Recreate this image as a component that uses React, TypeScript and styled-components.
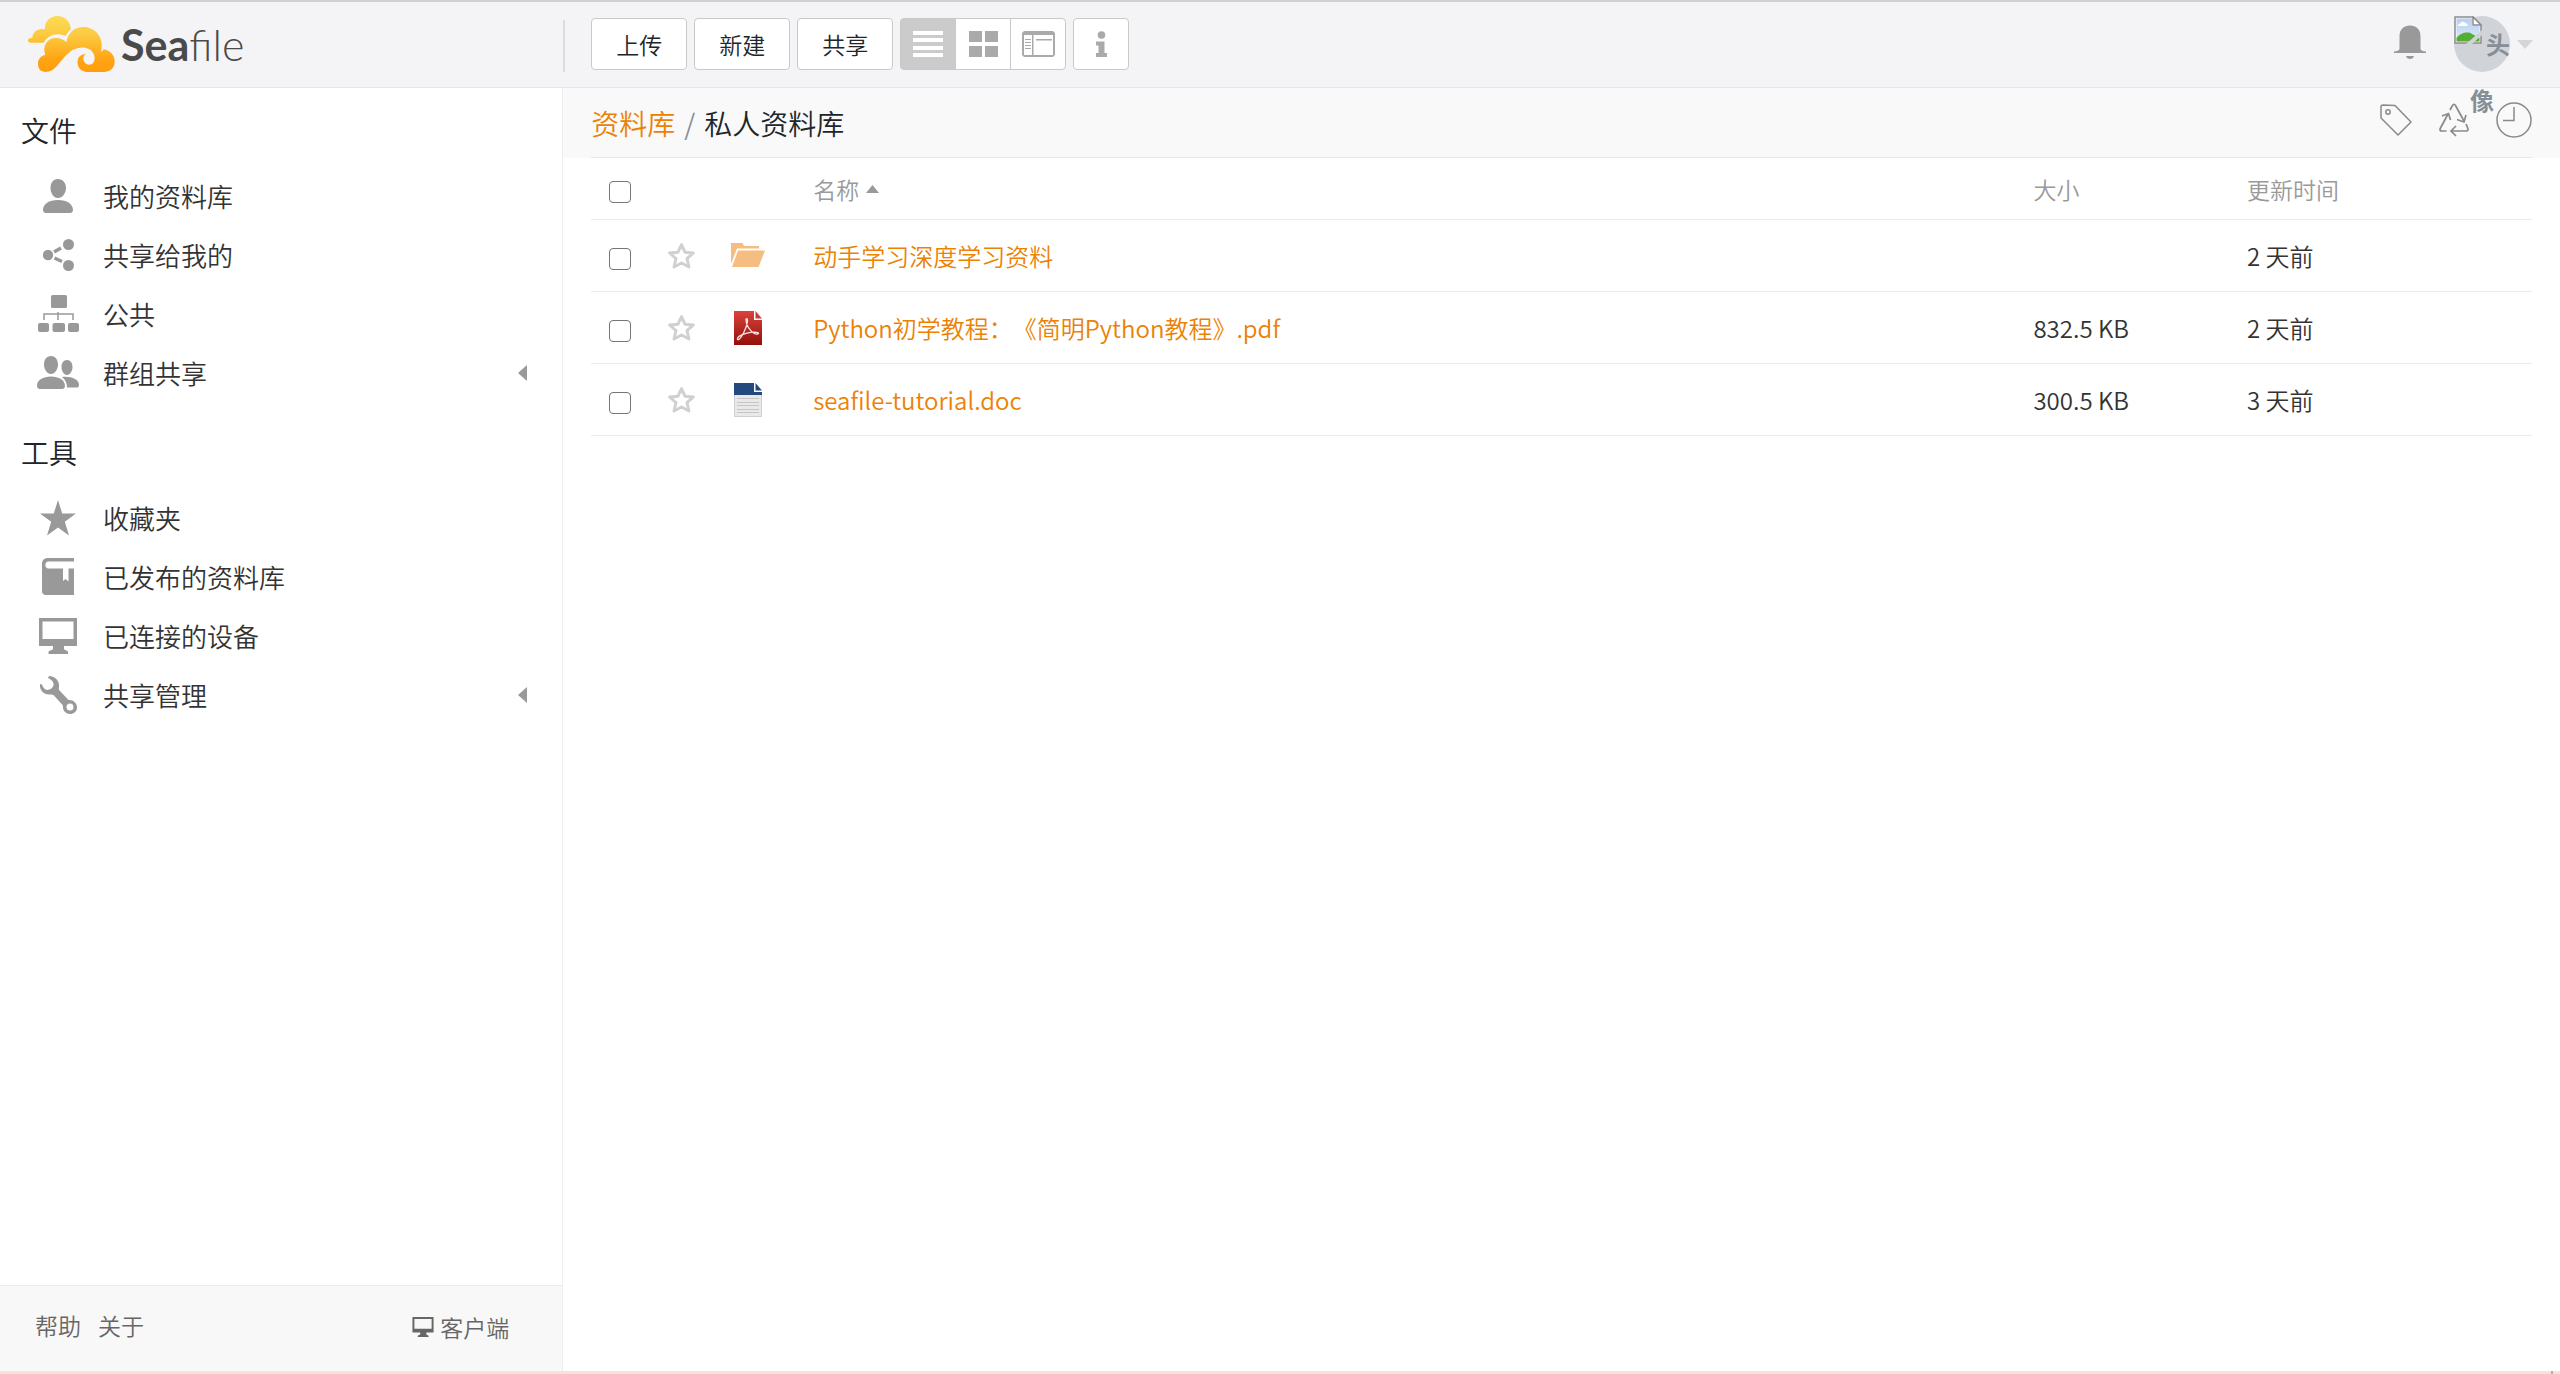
import React from 'react';
import styled, { createGlobalStyle } from 'styled-components';

const GlobalStyle = createGlobalStyle`
  *, *::before, *::after { box-sizing: border-box; }
  body {
    margin: 0;
    background: #fff;
    color: #212529;
    font-family: "Noto Sans CJK SC", "Open Sans", sans-serif;
    font-size: 24px;
    font-weight: 350;
    line-height: 36px;
    text-spacing-trim: space-all;
  }
  button { font: inherit; color: inherit; margin: 0; padding: 0; background: none; border: 0; cursor: pointer; }
  a { color: inherit; text-decoration: none; }
  svg { display: block; flex: none; }
`;

const Page = styled.div`
  min-height: 100vh;
  display: flex;
  flex-direction: column;
  border-top: 2px solid #d1d1d3;
`;

const Header = styled.header`
  display: flex;
  height: 86px;
  flex: none;
  background: #f4f4f7;
  border-bottom: 1px solid #e6e6e8;
`;

const LogoArea = styled.div`
  flex: 0 0 22%;
  padding: 14px 0 0 28px;
`;

const LogoLink = styled.a`
  display: inline-flex;
  align-items: flex-start;
  gap: 6px;
`;

const LogoText = styled.span`
  font-family: Lato, sans-serif;
  font-size: 43px;
  line-height: 58px;
  font-weight: 300;
  color: #4a4a4a;
  b { font-weight: 700; }
`;

const HeaderMain = styled.div`
  flex: 1;
  display: flex;
  justify-content: space-between;
  align-items: flex-start;
  padding: 16px 27px 0 28px;
  position: relative;
  &::before {
    content: "";
    position: absolute;
    left: 0;
    top: 18px;
    width: 2px;
    height: 52px;
    background: #dcdcde;
  }
`;

const Toolbar = styled.div`
  display: flex;
  gap: 7px;
`;

const TextButton = styled.button`
  height: 52px;
  padding: 0 24px;
  font-size: 23px;
  background: #fff;
  border: 1px solid #c9c9c9;
  border-radius: 4px;
`;

const IconButton = styled.button<{ $active?: boolean }>`
  width: 56px;
  height: 52px;
  display: flex;
  align-items: center;
  justify-content: center;
  border: 1px solid #c9c9c9;
  border-radius: 4px;
  background: ${p => (p.$active ? '#cbcbcb' : '#fff')};
  color: ${p => (p.$active ? '#fff' : '#aaa')};
`;

const ViewGroup = styled.div`
  display: flex;
  ${IconButton} { border-radius: 0; }
  ${IconButton} + ${IconButton} { margin-left: -1px; }
  ${IconButton}:first-child { border-radius: 4px 0 0 4px; }
  ${IconButton}:last-child { border-radius: 0 4px 4px 0; }
`;

const Account = styled.div`
  display: flex;
  align-items: center;
  height: 56px;
  margin-top: -2px;
  color: #999;
`;

const BellButton = styled.button`
  margin: 0 28px 4px 0;
`;

const AccountButton = styled.button`
  display: flex;
  align-items: center;
  gap: 7px;
`;

const Avatar = styled.span`
  display: block;
  position: relative;
  z-index: 1;
  width: 56px;
  height: 56px;
  border-radius: 50%;
  background: #d0d4d9;
  color: #868e96;
  font-size: 24px;
  font-weight: 700;
  line-height: 56px;
  text-align: center;
  svg { display: inline-block; vertical-align: top; margin-right: 4px; }
`;

const Body = styled.div`
  flex: 1;
  display: flex;
`;

const Sidebar = styled.aside`
  flex: 0 0 22%;
  display: flex;
  flex-direction: column;
  border-right: 1px solid #eee;
`;

const SideNav = styled.nav`
  flex: 1;
  padding: 20px 35px 0 21px;
`;

const SideHeading = styled.h2`
  margin: 0 0 14px;
  font-size: 28px;
  line-height: 44px;
  font-weight: inherit;
`;

const SideList = styled.ul`
  list-style: none;
  margin: 0 0 28px;
  padding: 0;
`;

const SideLink = styled.a`
  display: flex;
  align-items: center;
  height: 59px;
  font-size: 26px;
  color: #333;
`;

const SideIcon = styled.span`
  width: 74px;
  margin-right: 8px;
  display: flex;
  justify-content: center;
  color: #999;
`;

const SideArrow = styled.span`
  margin-left: auto;
  color: #999;
`;

const SideFooter = styled.footer`
  display: flex;
  align-items: flex-start;
  gap: 17px;
  height: 86px;
  padding: 21px 53px 0 35px;
  border-top: 1px solid #eaeaea;
  background: #f8f8f8;
  font-size: 23px;
  color: #666;
`;

const ClientLink = styled.a`
  margin-left: auto;
  padding-top: 2px;
  display: flex;
  align-items: center;
  gap: 6px;
`;

const Main = styled.main`
  flex: 1;
  min-width: 0;
`;

const PathBar = styled.div`
  padding: 0 28px;
  background: #f9f9f9;
`;

const PathInner = styled.div`
  height: 70px;
  display: flex;
  align-items: center;
  justify-content: space-between;
  border-bottom: 1px solid #e8e8e8;
`;

const Breadcrumb = styled.nav`
  display: flex;
  gap: 9px;
  font-size: 28px;
  line-height: 44px;
  a { color: #eb8205; }
  i { font-style: normal; color: #868e96; }
`;

const PathTools = styled.div`
  display: flex;
  align-items: center;
  gap: 27px;
  padding-bottom: 6px;
  color: #8a8a8a;
`;

const TableWrap = styled.div`
  padding: 0 28px;
`;

const Table = styled.table`
  width: 100%;
  table-layout: fixed;
  border-collapse: separate;
  border-spacing: 0;
  th, td {
    padding: 0 6px;
    text-align: left;
    vertical-align: middle;
    border-bottom: 1px solid #eaeaea;
  }
  th { height: 62px; font-size: 23px; font-weight: inherit; color: #999; }
  td { height: 72px; font-size: 24px; color: #333; }
`;

const Col = styled.col<{ $width: string }>`
  width: ${p => p.$width};
`;

const CheckCell = styled.td`
  && { padding: 6px 0 0 18px; }
`;

const StarCell = styled.td`
  && { padding: 0 0 0 19px; }
  button { display: block; }
`;

const IconCell = styled.td`
  && { padding: 0 0 0 24px; }
`;

const FileIcon = styled.span`
  display: flex;
  width: 34px;
  justify-content: center;
`;

const Check = styled.input.attrs({ type: 'checkbox' })`
  appearance: none;
  display: block;
  width: 22px;
  height: 22px;
  margin: 0;
  border: 1px solid #767676;
  border-radius: 4px;
  background: #fff;
  &:checked { background: #eb8205; }
`;

const SortButton = styled.button`
  display: inline-flex;
  align-items: center;
  gap: 7px;
`;

const FileLink = styled.a`
  color: #eb8205;
`;

const BottomEdge = styled.div`
  height: 3px;
  flex: none;
  display: flex;
  justify-content: flex-end;
  padding-right: 7px;
  background: #f3e5d5;
  &::after { content: ""; width: 2px; background: #b9aea3; }
`;

const Logo = () => (
  <svg width="87" height="56" viewBox="24 24 262 168" aria-hidden="true">
    <defs>
      <linearGradient id="cloud" gradientUnits="userSpaceOnUse" x1="0" y1="24" x2="0" y2="192">
        <stop offset="0" stopColor="#fbdc55" />
        <stop offset="0.35" stopColor="#fcc93f" />
        <stop offset="0.75" stopColor="#ffa616" />
        <stop offset="1" stopColor="#ff9d0c" />
      </linearGradient>
    </defs>
    <g fill="url(#cloud)">
      <path d="M32 104 C22 104 21 91 32 90 L37 90 C37 72 55 59 75 64 C73 42 90 24 112 24 C136 24 153 43 153 64 C146 70 140 77 137 84 C112 72 85 80 71 104 Z" />
      <path d="M76 192 C58 192 54 178 54 167 C54 152 64 143 76 141 C66 112 84 89 108 90 C122 90 132 96 140 102 C144 74 164 57 191 57 C222 57 246 82 246 110 C246 120 245 127 244 131 C249 129 251 126 252 124 C272 127 285 142 285 161 C285 179 272 192 255 192 L203 192 C184 192 173 179 173 163 C173 147 184 138 198 138 C189 145 189 155 194 162 C201 173 216 173 222 162 C229 148 222 132 209 124 C193 115 176 117 158 126 C140 137 127 156 111 174 C101 186 91 192 76 192 Z" />
    </g>
  </svg>
);

const ListIcon = () => (
  <svg width="30" height="26" fill="currentColor">
    <rect y="0" width="30" height="4" /><rect y="7" width="30" height="4" />
    <rect y="15" width="30" height="4" /><rect y="22" width="30" height="4" />
  </svg>
);
const GridIcon = () => (
  <svg width="29" height="26" fill="currentColor">
    <rect width="13" height="11" /><rect x="16" width="13" height="11" />
    <rect y="15" width="13" height="11" /><rect x="16" y="15" width="13" height="11" />
  </svg>
);
const ColumnIcon = () => (
  <svg width="33" height="26" fill="currentColor">
    <path fillRule="evenodd" d="M2 0H31L33 2V24L31 26H2L0 24V2ZM2 4V24H10V4ZM11.5 4V24H31V4Z" />
    <path d="M3 8h6v1H3zM3 11h6v1H3zM3 14h6v1H3zM3 17h6v1H3zM14 8h16v1.5H14z" />
  </svg>
);
const InfoIcon = () => (
  <svg width="11" height="26" fill="currentColor">
    <circle cx="5.5" cy="4" r="3.8" />
    <path d="M0 10.5H8.5V22H11V26H0V22H2.5V14.5H0Z" />
  </svg>
);
const BellIcon = () => (
  <svg width="32" height="34" fill="currentColor">
    <path d="M5.5 24V11C5.5 4.500 10 0.500 16 0.500S26.500 4.500 26.500 11V24C27 25.500 29 26.500 32 26.500V28H0V26.500C3 26.500 5 25.500 5.500 24ZM12 31H20C19.500 33 18 34 16 34S12.500 33 12 31Z" />
  </svg>
);
const BrokenImage = () => (
  <svg width="28" height="28">
    <defs>
      <linearGradient id="sky" x1="0" y1="0" x2="0" y2="1">
        <stop offset="0" stopColor="#b8cff0" /><stop offset="1" stopColor="#dfe9f8" />
      </linearGradient>
    </defs>
    <path d="M1 1H19L27 9V27H1Z" fill="#f7f9fb" stroke="#8c8c8c" strokeWidth="1.500" />
    <path d="M2.500 2.500H18V10H25.500V25.500H2.500Z" fill="url(#sky)" />
    <path d="M4 9.500C4 8 5.500 7.500 6.500 7.500C7 5.500 10 5 11 7C13 7 14 8.500 13.500 10H4Z" fill="#fff" />
    <path d="M2.500 25.500V22C6 17 14 15 18 18L25.500 22V25.500Z" fill="#55ad33" />
    <path d="M12 28L28 14V19L18 28Z" fill="#d0d4d9" />
    <path d="M19 1V9H27Z" fill="#fff" stroke="#8c8c8c" strokeWidth="1.500" />
  </svg>
);
const CaretDown = () => (
  <svg width="16" height="9"><path d="M0 0H16L8 9Z" fill="#d5d5d5" /></svg>
);
const CaretUp = () => (
  <svg width="13" height="8"><path d="M0 8H13L6.500 0Z" fill="#999" /></svg>
);
const CaretLeft = () => (
  <svg width="9" height="16" fill="currentColor"><path d="M9 0V16L0 8Z" /></svg>
);
const PersonIcon = () => (
  <svg width="30" height="34" fill="currentColor">
    <path d="M15 0C20 0 23 4 23 9C23 14 19.500 19 15 19S7.500 14 7.500 9C7.500 4 10 0 15 0ZM0 31C0 25 6 21 15 21S30 25 30 31C30 33.500 28 34 26 34H4C2 34 0 33.500 0 31Z" />
  </svg>
);
const ShareIcon = () => (
  <svg width="31" height="32" fill="currentColor">
    <circle cx="5" cy="16" r="5.200" /><circle cx="25.500" cy="5.500" r="5.500" /><circle cx="25.500" cy="26.500" r="5.500" />
    <path d="M11 13L18 9M11.500 19L19 22.500" stroke="currentColor" strokeWidth="3.500" />
  </svg>
);
const OrgIcon = () => (
  <svg width="41" height="37" fill="currentColor">
    <rect x="13" y="0" width="16" height="13" rx="1.500" />
    <rect x="0" y="28" width="11" height="9" rx="2" /><rect x="14.500" y="28" width="12.500" height="9" rx="2" /><rect x="30" y="28" width="11" height="9" rx="2" />
    <path d="M6 25V19H35V25M20 17V25" fill="none" stroke="currentColor" strokeWidth="1.500" />
  </svg>
);
const GroupIcon = () => (
  <svg width="42" height="33" fill="currentColor">
    <path d="M14 0C18.500 0 21 4 21 8.500C21 13 18 18 14 18S7 13 7 8.500C7 4 9.500 0 14 0ZM0 30C0 24 6 20.500 14 20.500S28 24 28 30C28 32.500 26 33 24 33H4C2 33 0 32.500 0 30Z" />
    <path d="M30 4C33.500 4 35.500 7 35.500 11C35.500 15 33 19 30 19S24.500 15 24.500 11C24.500 7 26.500 4 30 4ZM25 21C34 20 42 23 42 29C42 31 41 31.500 39 31.500H30C30 27 28.500 24 25 21Z" />
  </svg>
);
const StarIcon = () => (
  <svg width="36" height="36" viewBox="0 0 36 36" fill="currentColor">
    <path d="M18 0L22.200 13.500H36L24.800 21.800L29 35.500L18 27.500L7 35.500L11.200 21.800L0 13.500H13.800Z" />
  </svg>
);
const BookIcon = () => (
  <svg width="32" height="37" fill="currentColor">
    <path d="M6 0H32V3.500H6C2.500 4 2.500 10 6 10.500H21V23L23.500 21L26.500 23.500V10.500H32V37H4C1.500 37 0 35.500 0 33V6C0 2 2.500 0 6 0Z" />
  </svg>
);
const MonitorIcon = ({ width = 38, height = 36 }: { width?: number; height?: number }) => (
  <svg width={width} height={height} viewBox="0 0 38 36" fill="currentColor">
    <path fillRule="evenodd" d="M0 0H38V28H25V31C25 32 29 32.500 29 34V36H9.500V34C9.500 32.500 14 32 14 31V28H0ZM3.500 3.500V21H34.500V3.500Z" />
  </svg>
);
const WrenchIcon = () => (
  <svg width="38" height="38" fill="currentColor">
    <path fillRule="evenodd" d="M10 0C16 0 21 5 20 11C19.700 13 20 14 21 15L29.500 24C34 23.500 38 27 38 31.500C38 35.500 35 38 31 38C27 38 24 35 24 31C24 30 24 29.500 23.500 29L15 19.500C14 18.500 13 18.500 11 18.500C5 19 0 14 1 8L3 8.500C4 12 7 15 10 13.500C13 13 15 10 14.500 7.500C14 4.500 11 3 9 2ZM31 27.500A3.500 3.500 0 1 0 31 34.500A3.500 3.500 0 1 0 31 27.500Z" />
  </svg>
);
const TagIcon = () => (
  <svg width="32" height="32" fill="none" stroke="currentColor" strokeWidth="1.500">
    <path d="M1 3V14L18 31L31 18L15 1.500L3 1Q1 1 1 3Z" strokeLinejoin="round" />
    <circle cx="8" cy="8" r="2.200" />
  </svg>
);
const RecycleIcon = () => (
  <svg width="30" height="34" fill="none" stroke="currentColor" strokeWidth="1.700">
    <path d="M11 7L13.500 2.500Q15 0 16.500 2.500L25 18M18 16.500L25 19L27 12" />
    <path d="M7.500 28H3Q0 28 1.500 25L9 11M3 13L9.500 10.500L11.500 17" />
    <path d="M27 21L28.500 24.500Q30 28 27 28H12M17 23L12 28L17 33" />
  </svg>
);
const ClockIcon = () => (
  <svg width="36" height="36" fill="none" stroke="currentColor" strokeWidth="1.500">
    <circle cx="18" cy="18" r="17" /><path d="M18 5V18.500H7" />
  </svg>
);
const StarOutline = () => (
  <svg width="27" height="26" fill="none" stroke="#d0d0d0" strokeWidth="3" strokeLinejoin="round">
    <path d="M13.500 1.700L17 9.200L25.300 10L19 15.600L21 24L13.500 20L6 24L8 15.600L1.700 10L10 9.200Z" />
  </svg>
);
const FolderIcon = () => (
  <svg width="34" height="25" fill="#f6bd80">
    <path d="M0 0H11.500L13 3H28V5.500H6L0 21Z" />
    <path d="M7 7.500H34L27.500 24H1Z" />
  </svg>
);
const PdfIcon = () => (
  <svg width="28" height="34">
    <defs>
      <linearGradient id="pdf" x1="0" y1="0" x2="0" y2="1">
        <stop offset="0" stopColor="#dc423c" /><stop offset="1" stopColor="#92100b" />
      </linearGradient>
    </defs>
    <path d="M0 0H20V9H28V34H0Z" fill="url(#pdf)" />
    <path d="M21.500 0L28 7.500H21.500Z" fill="#d23a35" />
    <path d="M12 8C14.500 6 14 13 10 21C6 29 3 30 3.500 27.500C4 25 11 22 18 21.200C24 20.500 26 22.500 23.500 23C20 23.500 12 17 12 8Z" fill="none" stroke="#fbe3e0" strokeWidth="1.300" />
  </svg>
);
const DocIcon = () => (
  <svg width="28" height="34">
    <path d="M0 0H28V34H0Z" fill="#e9e9e9" />
    <path d="M0.500 12V33.500H27.500V12" fill="none" stroke="#cfcfcf" />
    <path d="M0 0H20V9H28V12H0Z" fill="#24497f" />
    <path d="M20 0H28V9H20Z" fill="#fff" />
    <path d="M21.500 0L28 7.500H21.500Z" fill="#24497f" />
    <path d="M3 15.500H25M3 19.500H25M3 22.500H25M3 26.500H25M3 29.500H25" stroke="#c6c6c6" />
  </svg>
);

type NavItem = { label: string; icon: React.ReactNode; expandable?: boolean };

const fileNav: NavItem[] = [
  { label: '我的资料库', icon: <PersonIcon /> },
  { label: '共享给我的', icon: <ShareIcon /> },
  { label: '公共', icon: <OrgIcon /> },
  { label: '群组共享', icon: <GroupIcon />, expandable: true },
];

const toolNav: NavItem[] = [
  { label: '收藏夹', icon: <StarIcon /> },
  { label: '已发布的资料库', icon: <BookIcon /> },
  { label: '已连接的设备', icon: <MonitorIcon /> },
  { label: '共享管理', icon: <WrenchIcon />, expandable: true },
];

const files = [
  { name: '动手学习深度学习资料', icon: <FolderIcon />, size: '', time: '2 天前' },
  { name: 'Python初学教程：《简明Python教程》.pdf', icon: <PdfIcon />, size: '832.5 KB', time: '2 天前' },
  { name: 'seafile-tutorial.doc', icon: <DocIcon />, size: '300.5 KB', time: '3 天前' },
];

const NavSection = ({ title, items }: { title: string; items: NavItem[] }) => (
  <>
    <SideHeading>{title}</SideHeading>
    <SideList>
      {items.map(item => (
        <li key={item.label}>
          <SideLink href="#">
            <SideIcon>{item.icon}</SideIcon>
            {item.label}
            {item.expandable && <SideArrow><CaretLeft /></SideArrow>}
          </SideLink>
        </li>
      ))}
    </SideList>
  </>
);

export default function App() {
  return (
    <Page>
      <GlobalStyle />
      <Header>
        <LogoArea>
          <LogoLink href="#">
            <Logo />
            <LogoText><b>Sea</b>file</LogoText>
          </LogoLink>
        </LogoArea>
        <HeaderMain>
          <Toolbar>
            <TextButton>上传</TextButton>
            <TextButton>新建</TextButton>
            <TextButton>共享</TextButton>
            <ViewGroup>
              <IconButton $active aria-label="列表"><ListIcon /></IconButton>
              <IconButton aria-label="网格"><GridIcon /></IconButton>
              <IconButton aria-label="分栏"><ColumnIcon /></IconButton>
            </ViewGroup>
            <IconButton aria-label="详情"><InfoIcon /></IconButton>
          </Toolbar>
          <Account>
            <BellButton aria-label="通知"><BellIcon /></BellButton>
            <AccountButton>
              <Avatar><BrokenImage />头像</Avatar>
              <CaretDown />
            </AccountButton>
          </Account>
        </HeaderMain>
      </Header>
      <Body>
        <Sidebar>
          <SideNav>
            <NavSection title="文件" items={fileNav} />
            <NavSection title="工具" items={toolNav} />
          </SideNav>
          <SideFooter>
            <a href="#">帮助</a>
            <a href="#">关于</a>
            <ClientLink href="#"><MonitorIcon width={22} height={20} />客户端</ClientLink>
          </SideFooter>
        </Sidebar>
        <Main>
          <PathBar>
            <PathInner>
              <Breadcrumb>
                <a href="#">资料库</a>
                <i>/</i>
                <span>私人资料库</span>
              </Breadcrumb>
              <PathTools>
                <button aria-label="标签"><TagIcon /></button>
                <button aria-label="回收站"><RecycleIcon /></button>
                <button aria-label="历史"><ClockIcon /></button>
              </PathTools>
            </PathInner>
          </PathBar>
          <TableWrap>
            <Table>
              <colgroup>
                <Col $width="58px" /><Col $width="58px" /><Col $width="100px" />
                <Col $width="auto" /><Col $width="11%" /><Col $width="15%" />
              </colgroup>
              <thead>
                <tr>
                  <CheckCell as="th"><Check aria-label="全选" /></CheckCell>
                  <th /><th />
                  <th><SortButton>名称<CaretUp /></SortButton></th>
                  <th>大小</th>
                  <th>更新时间</th>
                </tr>
              </thead>
              <tbody>
                {files.map(f => (
                  <tr key={f.name}>
                    <CheckCell><Check aria-label={f.name} /></CheckCell>
                    <StarCell><button aria-label="收藏"><StarOutline /></button></StarCell>
                    <IconCell><FileIcon>{f.icon}</FileIcon></IconCell>
                    <td><FileLink href="#">{f.name}</FileLink></td>
                    <td>{f.size}</td>
                    <td>{f.time}</td>
                  </tr>
                ))}
              </tbody>
            </Table>
          </TableWrap>
        </Main>
      </Body>
      <BottomEdge />
    </Page>
  );
}
